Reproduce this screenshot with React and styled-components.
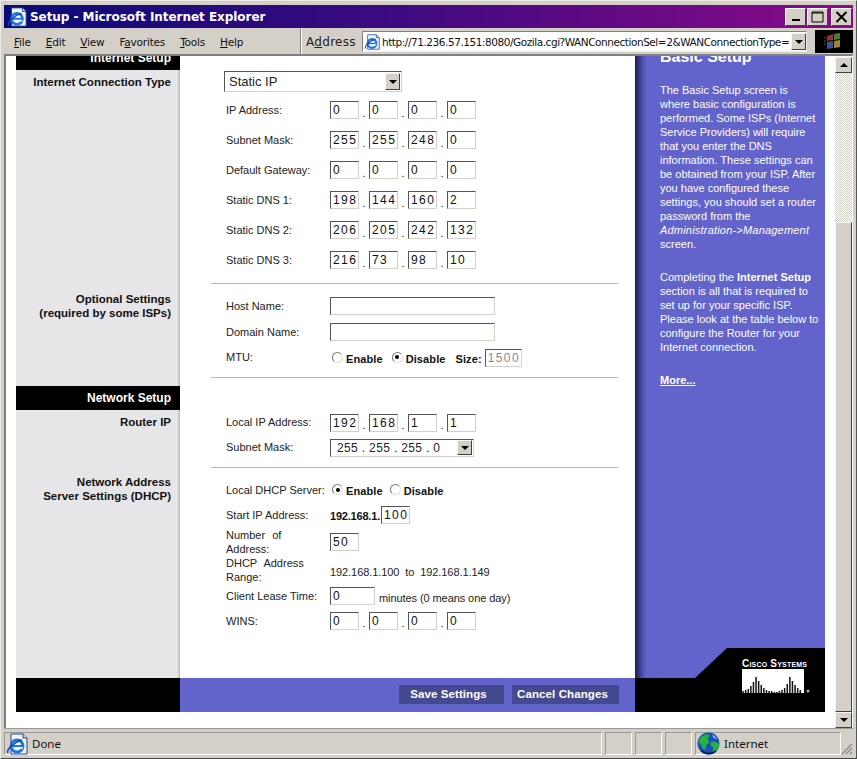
import React from 'react';
import styled, { createGlobalStyle } from 'styled-components';

const GlobalStyle = createGlobalStyle`
  html, body {
    margin: 0;
    padding: 0;
    background: #d4d0c8;
  }
  * {
    box-sizing: border-box;
  }
`;

const BLUE = '#6263cb';
const CHROME = '#d4d0c8';

const Win = styled.div`
  width: 857px;
  height: 759px;
  padding: 4px 3px 3px;
  background: ${CHROME};
  border: 1px solid #eeece6;
  border-right-color: #555;
  border-bottom-color: #444;
  display: flex;
  flex-direction: column;
  overflow: hidden;
  font-family: "Liberation Sans", Arial, sans-serif;
`;

const TitleBar = styled.div`
  height: 23px;
  flex: none;
  display: flex;
  align-items: center;
  gap: 3px;
  padding: 0 1px 0 3px;
  background: linear-gradient(90deg, #0a0a78 0%, #3c0a80 45%, #8a0a88 100%);
  color: #fff;
  font-family: "DejaVu Sans", sans-serif;
  font-weight: bold;
  font-size: 12px;
  letter-spacing: -0.05px;
`;

const TitleText = styled.span`
  flex: 1;
`;

const TitleButtons = styled.div`
  display: flex;
  gap: 1px;
`;

const TitleButton = styled.div`
  width: 21px;
  height: 18px;
  background: ${CHROME};
  border: 1px solid;
  border-color: #fff #404040 #404040 #fff;
  display: flex;
  align-items: center;
  justify-content: center;
  margin-left: ${({ $gap }) => ($gap ? '2px' : '0')};
`;

const MenuBar = styled.div`
  height: 27px;
  flex: none;
  display: flex;
  align-items: center;
  padding: 1px 0 0 10px;
  border-bottom: 1px solid #808080;
  font-family: "DejaVu Sans", sans-serif;
  font-size: 10.5px;
  letter-spacing: -0.2px;
  color: #111;
`;

const MenuList = styled.div`
  width: 288px;
  height: 100%;
  display: flex;
  align-items: center;
  gap: 15px;
  border-right: 1px solid #808080;
  box-shadow: 1px 0 0 #fff;
`;

const MenuItem = styled.span`
  u {
    text-decoration: underline;
  }
`;

const AddressLabel = styled.span`
  margin-left: 5px;
  width: 56px;
  flex: none;
  font-size: 12px;
  letter-spacing: 0.3px;
  color: #222;
`;

const AddressField = styled.div`
  width: 445px;
  height: 21px;
  flex: none;
  display: flex;
  align-items: center;
  gap: 2px;
  padding-left: 1px;
  background: #fff;
  border: 1px solid;
  border-color: #808080 #eee #eee #808080;
  overflow: hidden;
  white-space: nowrap;
  position: relative;
`;

const AddressText = styled.span`
  flex: 1;
  overflow: hidden;
  letter-spacing: -0.45px;
`;

const ArrowButton = styled.div`
  width: ${({ $w }) => $w || 15}px;
  height: ${({ $h }) => $h || 17}px;
  flex: none;
  background: ${CHROME};
  border: 1px solid;
  border-color: #f4f4f4 #404040 #404040 #f4f4f4;
  display: flex;
  align-items: center;
  justify-content: center;
  &::after {
    content: '';
    border: 4px solid transparent;
    border-top-color: #000;
    border-bottom-width: 0;
  }
`;

const Throbber = styled.div`
  width: 38px;
  height: 23px;
  flex: none;
  margin-left: 8px;
  background: #000;
  display: flex;
  align-items: center;
  justify-content: center;
`;

const Viewport = styled.div`
  flex: 1;
  min-height: 0;
  display: flex;
  background: #fff;
  border-top: 1px solid #808080;
  border-left: 2px solid #808080;
  border-right: 1px solid #fff;
`;

const PageClip = styled.div`
  flex: 1;
  overflow: hidden;
`;

const Page = styled.div`
  margin: -10px 0 0 10px;
  width: 809px;
  display: grid;
  grid-template-columns: 619px 190px;
`;

const Main = styled.div`
  display: flex;
  flex-direction: column;
  height: 632px;
`;

const Section = styled.div`
  display: grid;
  grid-template-columns: 164px 455px;
  flex: ${({ $fill }) => ($fill ? 1 : 'none')};
`;

const Heading = styled.div`
  height: 24px;
  background: #000;
  color: #fff;
  font-size: 12px;
  font-weight: bold;
  line-height: 24px;
  text-align: right;
  padding-right: 9px;
`;

const SideCell = styled.div`
  background: linear-gradient(90deg, #e6e5e8 0, #e6e5e8 161px, #b8b7ba 164px);
  padding: ${({ $top }) => $top}px ${({ $flush }) => ($flush ? 0 : 9)}px 0 0;
  text-align: right;
  font-size: 11.5px;
  font-weight: bold;
  line-height: 14px;
  color: #111;
`;

const FormCell = styled.div`
  padding: ${({ $top }) => $top || 0}px 17px 0 46px;
  background: #fff;
`;

const Divider = styled.hr`
  margin: ${({ $above }) => $above}px 0 0 -15px;
  height: 1px;
  border: 0;
  background: #b4b4cf;
`;

const Spacer = styled.div`
  height: ${({ $h }) => $h}px;
`;

const Row = styled.div`
  height: ${({ $h }) => $h}px;
  display: flex;
  align-items: center;
  font-size: 11px;
  color: #222;
`;

const Label = styled.div`
  width: 104px;
  flex: none;
  padding-bottom: ${({ $raised }) => ($raised ? 2 : 0)}px;
  line-height: 14px;
  word-spacing: ${({ $wide }) => ($wide ? '4px' : '0')};
`;

const Field = styled.input`
  width: ${({ $w }) => $w || 29}px;
  height: 18px;
  flex: none;
  padding: 0 0 0 2px;
  background: #fff;
  border: 1px solid;
  border-color: #555 #d4d0c8 #d4d0c8 #555;
  outline: 0;
  font-family: "Liberation Sans", Arial, sans-serif;
  font-size: 12px;
  letter-spacing: 1.4px;
  color: ${({ disabled }) => (disabled ? '#888' : '#111')};
`;

const Dot = styled.span`
  width: 10px;
  flex: none;
  text-align: center;
  padding-top: 5px;
`;

const Select = styled.div`
  width: ${({ $w }) => $w}px;
  height: ${({ $h }) => $h}px;
  margin-left: ${({ $left }) => $left || 0}px;
  flex: none;
  display: flex;
  align-items: center;
  justify-content: space-between;
  padding: 0 1px 0 ${({ $inset }) => $inset || 4}px;
  background: #fff;
  border: 1px solid;
  border-color: #555 #d4d0c8 #d4d0c8 #555;
  font-size: ${({ $size }) => $size}px;
  letter-spacing: ${({ $track }) => $track || 0}px;
  white-space: nowrap;
  color: #222;
`;

const Radio = styled.span`
  width: 11px;
  height: 11px;
  flex: none;
  border-radius: 50%;
  background: #fff;
  border: 1px solid;
  border-color: #777 #ddd #ddd #777;
  display: inline-flex;
  align-items: center;
  justify-content: center;
  margin-top: -3px;
  &::after {
    content: '';
    width: 4px;
    height: 4px;
    border-radius: 50%;
    background: ${({ $on }) => ($on ? '#000' : 'transparent')};
  }
`;

const Option = styled.span`
  display: inline-flex;
  align-items: center;
  gap: 3px;
  margin: ${({ $m }) => $m || '0 7px 0 2px'};
  font-weight: bold;
  padding-top: 1px;
  letter-spacing: 0.1px;
  color: #111;
`;

const Strong = styled.b`
  width: 51px;
  flex: none;
  font-size: 11px;
  letter-spacing: -0.2px;
  color: #111;
  white-space: nowrap;
  padding-top: 2px;
`;

const Note = styled.span`
  margin-left: ${({ $left }) => $left || 0}px;
  letter-spacing: -0.08px;
  white-space: pre;
  padding-top: 3px;
`;

const Panel = styled.div`
  background: linear-gradient(90deg, #1c1c50 0, #3e3e8e 5px, ${BLUE} 11px);
  height: 632px;
  overflow: hidden;
  padding: 0 0 0 25px;
  color: #fff;
  font-size: 11px;
  line-height: 14px;
  white-space: nowrap;
`;

const PanelTitle = styled.div`
  height: 37px;
  padding-top: 2px;
  font-size: 16px;
  line-height: 18px;
  font-weight: bold;
`;

const PanelPara = styled.p`
  margin: 0 0 19px;
  em {
    letter-spacing: 0.2px;
  }
`;

const MoreLink = styled.a`
  font-weight: bold;
  text-decoration: underline;
  color: #fff;
`;

const Footer = styled.div`
  grid-column: 1 / -1;
  height: 34px;
  display: grid;
  grid-template-columns: 164px 455px 190px;
`;

const FooterEnd = styled.div`
  background: #000;
  position: relative;
`;

const FooterBlue = styled.div`
  background: ${BLUE};
  display: flex;
  justify-content: flex-end;
  align-items: center;
  gap: 8px;
  padding: 0 16px 2px 0;
`;

const ActionButton = styled.div`
  width: ${({ $w }) => $w}px;
  height: 19px;
  padding-right: 6px;
  background: #454a90;
  color: #fff;
  font-size: 11.5px;
  font-weight: bold;
  line-height: 19px;
  text-align: center;
  letter-spacing: 0.1px;
`;

const Corner = styled.div`
  position: absolute;
  right: 0;
  bottom: 100%;
  width: 130px;
  height: 30px;
  background: #000;
  clip-path: polygon(32px 0, 100% 0, 100% 100%, 0 100%);
`;

const Logo = styled.div`
  position: absolute;
  left: 107px;
  top: -20px;
  width: 70px;
`;

const LogoText = styled.div`
  color: #fff;
  font-size: 10px;
  font-weight: bold;
  font-variant: small-caps;
  line-height: 11px;
  letter-spacing: 0.2px;
  white-space: nowrap;
`;

const Scrollbar = styled.div`
  width: 17px;
  flex: none;
  display: flex;
  flex-direction: column;
  margin-top: 1px;
  background: repeating-conic-gradient(#fff 0 25%, ${CHROME} 0 50%) 0 0 / 2px 2px;
`;

const ScrollButton = styled.div`
  height: 16px;
  flex: none;
  background: ${CHROME};
  border: 1px solid;
  border-color: #f4f4f4 #404040 #404040 #f4f4f4;
  display: flex;
  align-items: center;
  justify-content: center;
  &::after {
    content: '';
    border: 4px solid transparent;
    ${({ $up }) =>
      $up
        ? 'border-bottom-color: #000; border-top-width: 0;'
        : 'border-top-color: #000; border-bottom-width: 0;'}
  }
`;

const ScrollTrack = styled.div`
  flex: 1;
  padding-top: 149px;
  display: flex;
`;

const ScrollThumb = styled.div`
  flex: 1;
  background: ${CHROME};
  border: 1px solid;
  border-color: #f4f4f4 #404040 #404040 #f4f4f4;
`;

const StatusBar = styled.div`
  height: 27px;
  flex: none;
  display: flex;
  gap: 3px;
  padding-top: 3px;
  border-top: 1px solid #999;
  font-family: "Noto Sans", sans-serif;
  font-size: 11.5px;
  color: #111;
  position: relative;
`;

const StatusPanel = styled.div`
  width: ${({ $w }) => $w}px;
  height: 23px;
  flex: none;
  display: flex;
  align-items: center;
  gap: 4px;
  padding-left: 1px;
  border: 1px solid;
  border-color: #999 #fff #fff #999;
`;

const Grip = styled.svg`
  position: absolute;
  right: 0;
  bottom: 0;
`;

const Flag = styled.svg`
  opacity: 0.8;
`;

function IeIcon({ size }) {
  return (
    <svg width={size} height={size} viewBox="0 0 22 22">
      <path d="M5 1h12l4 4v16H5z" fill="#f2f6fc" stroke="#24408a" />
      <path d="M17 1v4h4" fill="#cfdcf2" stroke="#24408a" />
      <circle cx="11" cy="13" r="6" fill="none" stroke="#1f74d8" strokeWidth="3" />
      <path d="M6 13h10" stroke="#1f74d8" strokeWidth="2" />
      <path d="M17 15h-5" stroke="#f2f6fc" strokeWidth="1.6" />
      <path d="M2 20c-2-3 6-11 14-13" fill="none" stroke="#0f4fae" strokeWidth="1.6" />
    </svg>
  );
}

function Globe() {
  return (
    <svg width="23" height="23" viewBox="0 0 23 23">
      <circle cx="11.5" cy="11.5" r="11" fill="#1c4fb8" />
      <path d="M3 6c3-3 7-5 9-3 1 2-2 3-1 5 2 2 1 4-1 4-2 3-1 6-3 6-2-2-2-5-4-6-2-2-1-4 0-6z" fill="#22b43c" />
      <path d="M14 10c3-1 6 0 8 2 0 4-3 8-6 9-1-3 1-4 0-6-2 0-3-3-2-5z" fill="#22b43c" />
      <path d="M15 3c2 0 4 2 5 4-2 0-4-1-5-4z" fill="#7fb2e8" />
      <path d="M4 18c3 4 10 5 15 1" fill="none" stroke="#0a1f66" strokeWidth="2" />
    </svg>
  );
}

function WinFlag() {
  return (
    <Flag width="20" height="19" viewBox="0 0 20 19">
      <path d="M3 4l6-2v6l-6 1z" fill="#b8443a" />
      <path d="M10 2l6-1v6l-6 1z" fill="#5a9a4a" />
      <path d="M3 10l6-1v7l-6 1z" fill="#4a6ab0" />
      <path d="M10 9l6-1v7l-6 1z" fill="#c8a83a" />
      <path d="M0 6h2M0 9h2M0 12h2" stroke="#777" />
    </Flag>
  );
}

// heights of the logo bars, two peaks like the real mark
const BAR_HEIGHTS = [2, 3, 4, 7, 11, 16, 12, 8, 5, 3, 2, 2, 1, 1, 2, 3, 5, 9, 16, 12, 8, 5, 3];

function CiscoBars() {
  return (
    <svg width="70" height="24" viewBox="0 0 70 24">
      <rect x="0" y="0" width="62" height="24" fill="#fff" />
      {BAR_HEIGHTS.map((h, i) => (
        <rect key={i} x={0.3 + i * 2.6} y={24 - h} width="1.5" height={h} fill="#111" />
      ))}
      <circle cx="66" cy="22" r="1.5" fill="#aaa" />
    </svg>
  );
}

function Octets({ values }) {
  return values.map((v, i) => (
    <React.Fragment key={i}>
      {i > 0 && <Dot>.</Dot>}
      <Field readOnly value={v} />
    </React.Fragment>
  ));
}

const INTERNET_ROWS = [
  ['IP Address:', ['0', '0', '0', '0']],
  ['Subnet Mask:', ['255', '255', '248', '0']],
  ['Default Gateway:', ['0', '0', '0', '0']],
  ['Static DNS 1:', ['198', '144', '160', '2']],
  ['Static DNS 2:', ['206', '205', '242', '132']],
  ['Static DNS 3:', ['216', '73', '98', '10']],
];

export default function App() {
  return (
    <>
      <GlobalStyle />
      <Win>
        <TitleBar>
          <IeIcon size={20} />
          <TitleText>Setup - Microsoft Internet Explorer</TitleText>
          <TitleButtons>
            <TitleButton>
              <svg width="10" height="10"><rect x="1" y="7" width="8" height="2" fill="#000" /></svg>
            </TitleButton>
            <TitleButton>
              <svg width="13" height="12"><path d="M1 1h11v10H1z M1 2h11" fill="none" stroke="#000" /></svg>
            </TitleButton>
            <TitleButton $gap>
              <svg width="13" height="12"><path d="M1.5 1l10 10M11.5 1l-10 10" stroke="#000" strokeWidth="2" /></svg>
            </TitleButton>
          </TitleButtons>
        </TitleBar>

        <MenuBar>
          <MenuList>
            <MenuItem><u>F</u>ile</MenuItem>
            <MenuItem><u>E</u>dit</MenuItem>
            <MenuItem><u>V</u>iew</MenuItem>
            <MenuItem>F<u>a</u>vorites</MenuItem>
            <MenuItem><u>T</u>ools</MenuItem>
            <MenuItem><u>H</u>elp</MenuItem>
          </MenuList>
          <AddressLabel>A<u>d</u>dress</AddressLabel>
          <AddressField>
            <IeIcon size={16} />
            <AddressText>http://71.236.57.151:8080/Gozila.cgi?WANConnectionSel=2&amp;WANConnectionType=</AddressText>
            <ArrowButton />
          </AddressField>
          <Throbber><WinFlag /></Throbber>
        </MenuBar>

        <Viewport>
          <PageClip>
            <Page>
              <Main>
                <Section>
                  <Heading>Internet Setup</Heading>
                  <FormCell />
                </Section>
                <Section>
                  <SideCell $top={5}>Internet Connection Type</SideCell>
                  <FormCell $top={1}>
                    <Select $w={178} $h={21} $left={-2} $size={13}>
                      Static IP
                      <ArrowButton />
                    </Select>
                    <Spacer $h={3} />
                    {INTERNET_ROWS.map(([label, values]) => (
                      <Row key={label} $h={30}>
                        <Label>{label}</Label>
                        <Octets values={values} />
                      </Row>
                    ))}
                    <Divider $above={8} />
                  </FormCell>
                </Section>
                <Section>
                  <SideCell $top={8}>Optional Settings<br />(required by some ISPs)</SideCell>
                  <FormCell $top={9}>
                    <Row $h={26}>
                      <Label>Host Name:</Label>
                      <Field readOnly $w={165} />
                    </Row>
                    <Row $h={26}>
                      <Label>Domain Name:</Label>
                      <Field readOnly $w={165} />
                    </Row>
                    <Row $h={26}>
                      <Label $raised>MTU:</Label>
                      <Option><Radio />Enable</Option>
                      <Option><Radio $on />Disable</Option>
                      <Option $m="0 3px 0 3px">Size:</Option>
                      <Field readOnly disabled $w={37} value="1500" />
                    </Row>
                    <Divider $above={6} />
                  </FormCell>
                </Section>
                <Section>
                  <SideCell $top={8} $flush><Heading>Network Setup</Heading></SideCell>
                  <FormCell />
                </Section>
                <Section>
                  <SideCell $top={5}>Router IP</SideCell>
                  <FormCell>
                    <Row $h={25}>
                      <Label $raised>Local IP Address:</Label>
                      <Octets values={['192', '168', '1', '1']} />
                    </Row>
                    <Row $h={25}>
                      <Label $raised>Subnet Mask:</Label>
                      <Select $w={144} $h={18} $size={12} $track={0.35} $inset={6}>
                        255 . 255 . 255 . 0
                        <ArrowButton $h={15} />
                      </Select>
                    </Row>
                    <Divider $above={7} />
                  </FormCell>
                </Section>
                <Section $fill>
                  <SideCell $top={7}>Network Address<br />Server Settings (DHCP)</SideCell>
                  <FormCell $top={10}>
                    <Row $h={25}>
                      <Label $raised>Local DHCP Server:</Label>
                      <Option><Radio $on />Enable</Option>
                      <Option $m="0"><Radio />Disable</Option>
                    </Row>
                    <Row $h={24}>
                      <Label>Start IP Address:</Label>
                      <Strong>192.168.1.</Strong>
                      <Field readOnly value="100" />
                    </Row>
                    <Row $h={29}>
                      <Label $wide>Number of<br />Address:</Label>
                      <Field readOnly value="50" />
                    </Row>
                    <Row $h={28}>
                      <Label $wide>DHCP Address<br />Range:</Label>
                      <Note>192.168.1.100  to  192.168.1.149</Note>
                    </Row>
                    <Row $h={24}>
                      <Label>Client Lease Time:</Label>
                      <Field readOnly $w={45} value="0" />
                      <Note $left={4}>minutes (0 means one day)</Note>
                    </Row>
                    <Row $h={25}>
                      <Label>WINS:</Label>
                      <Octets values={['0', '0', '0', '0']} />
                    </Row>
                  </FormCell>
                </Section>
              </Main>

              <Panel>
                <PanelTitle>Basic Setup</PanelTitle>
                <PanelPara>
                  The Basic Setup screen is<br />
                  where basic configuration is<br />
                  performed. Some ISPs (Internet<br />
                  Service Providers) will require<br />
                  that you enter the DNS<br />
                  information. These settings can<br />
                  be obtained from your ISP. After<br />
                  you have configured these<br />
                  settings, you should set a router<br />
                  password from the<br />
                  <em>Administration-&gt;Management</em><br />
                  screen.
                </PanelPara>
                <PanelPara>
                  Completing the <b>Internet Setup</b><br />
                  section is all that is required to<br />
                  set up for your specific ISP.<br />
                  Please look at the table below to<br />
                  configure the Router for your<br />
                  Internet connection.
                </PanelPara>
                <MoreLink>More...</MoreLink>
              </Panel>

              <Footer>
                <FooterEnd />
                <FooterBlue>
                  <ActionButton $w={105}>Save Settings</ActionButton>
                  <ActionButton $w={107}>Cancel Changes</ActionButton>
                </FooterBlue>
                <FooterEnd>
                  <Corner />
                  <Logo>
                    <LogoText>Cisco Systems</LogoText>
                    <CiscoBars />
                  </Logo>
                </FooterEnd>
              </Footer>
            </Page>
          </PageClip>
          <Scrollbar>
            <ScrollButton $up />
            <ScrollTrack><ScrollThumb /></ScrollTrack>
            <ScrollButton />
          </Scrollbar>
        </Viewport>

        <StatusBar>
          <StatusPanel $w={598}>
            <IeIcon size={22} />
            Done
          </StatusPanel>
          <StatusPanel $w={27} />
          <StatusPanel $w={27} />
          <StatusPanel $w={27} />
          <StatusPanel $w={146}>
            <Globe />
            Internet
          </StatusPanel>
          <Grip width="13" height="13" viewBox="0 0 13 13">
            <path d="M12 2L2 12M12 6l-6 6M12 10l-2 2" stroke="#888" strokeWidth="1.2" />
          </Grip>
        </StatusBar>
      </Win>
    </>
  );
}
